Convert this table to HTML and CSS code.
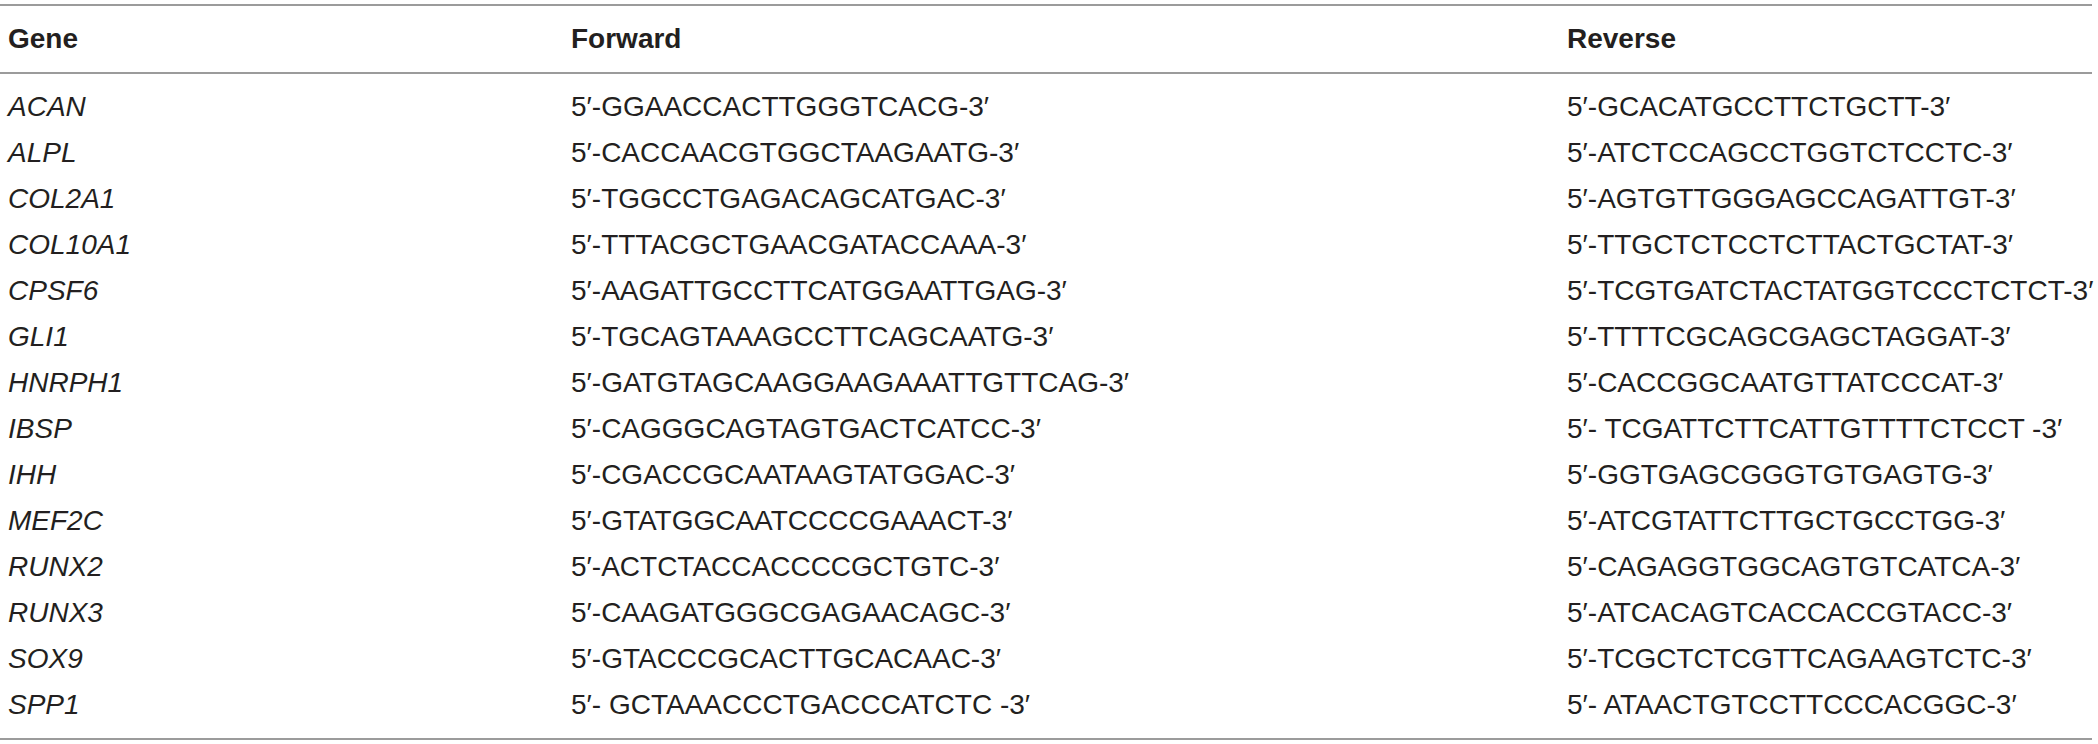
FILE: index.html
```html
<!DOCTYPE html>
<html>
<head>
<meta charset="utf-8">
<link rel="stylesheet" href="styles.css">
</head>
<body>
<table class="primers">
  <colgroup>
    <col class="c-gene">
    <col class="c-fwd">
    <col class="c-rev">
  </colgroup>
  <thead>
    <tr><th>Gene</th><th>Forward</th><th>Reverse</th></tr>
  </thead>
  <tbody>
    <tr><td class="gene">ACAN</td><td>5′-GGAACCACTTGGGTCACG-3′</td><td>5′-GCACATGCCTTCTGCTT-3′</td></tr>
    <tr><td class="gene">ALPL</td><td>5′-CACCAACGTGGCTAAGAATG-3′</td><td>5′-ATCTCCAGCCTGGTCTCCTC-3′</td></tr>
    <tr><td class="gene">COL2A1</td><td>5′-TGGCCTGAGACAGCATGAC-3′</td><td>5′-AGTGTTGGGAGCCAGATTGT-3′</td></tr>
    <tr><td class="gene">COL10A1</td><td>5′-TTTACGCTGAACGATACCAAA-3′</td><td>5′-TTGCTCTCCTCTTACTGCTAT-3′</td></tr>
    <tr><td class="gene">CPSF6</td><td>5′-AAGATTGCCTTCATGGAATTGAG-3′</td><td>5′-TCGTGATCTACTATGGTCCCTCTCT-3′</td></tr>
    <tr><td class="gene">GLI1</td><td>5′-TGCAGTAAAGCCTTCAGCAATG-3′</td><td>5′-TTTTCGCAGCGAGCTAGGAT-3′</td></tr>
    <tr><td class="gene">HNRPH1</td><td>5′-GATGTAGCAAGGAAGAAATTGTTCAG-3′</td><td>5′-CACCGGCAATGTTATCCCAT-3′</td></tr>
    <tr><td class="gene">IBSP</td><td>5′-CAGGGCAGTAGTGACTCATCC-3′</td><td>5′- TCGATTCTTCATTGTTTTCTCCT -3′</td></tr>
    <tr><td class="gene">IHH</td><td>5′-CGACCGCAATAAGTATGGAC-3′</td><td>5′-GGTGAGCGGGTGTGAGTG-3′</td></tr>
    <tr><td class="gene">MEF2C</td><td>5′-GTATGGCAATCCCCGAAACT-3′</td><td>5′-ATCGTATTCTTGCTGCCTGG-3′</td></tr>
    <tr><td class="gene">RUNX2</td><td>5′-ACTCTACCACCCCGCTGTC-3′</td><td>5′-CAGAGGTGGCAGTGTCATCA-3′</td></tr>
    <tr><td class="gene">RUNX3</td><td>5′-CAAGATGGGCGAGAACAGC-3′</td><td>5′-ATCACAGTCACCACCGTACC-3′</td></tr>
    <tr><td class="gene">SOX9</td><td>5′-GTACCCGCACTTGCACAAC-3′</td><td>5′-TCGCTCTCGTTCAGAAGTCTC-3′</td></tr>
    <tr><td class="gene">SPP1</td><td>5′- GCTAAACCCTGACCCATCTC -3′</td><td>5′- ATAACTGTCCTTCCCACGGC-3′</td></tr>
  </tbody>
</table>
</body>
</html>
```

FILE: styles.css
```css
html, body {
  margin: 0;
  padding: 0;
  background: #ffffff;
}

body {
  font-family: "Liberation Sans", Arial, Helvetica, sans-serif;
  color: #231f20;
}

.primers {
  margin-top: 4px;
  width: 2092px;
  border-collapse: collapse;
  table-layout: fixed;
  font-size: 28px;
  line-height: 46px;
}

.c-gene { width: 563px; }
.c-fwd { width: 996px; }
.c-rev { width: 533px; }

.primers th,
.primers td {
  padding: 0 8px;
  text-align: left;
  white-space: nowrap;
  vertical-align: baseline;
}

.primers thead tr {
  border-top: 2px solid #9b9b9b;
  border-bottom: 2px solid #9b9b9b;
}

.primers th {
  font-weight: bold;
  padding-top: 10px;
  padding-bottom: 10px;
}

.primers tbody tr:first-child td {
  padding-top: 10px;
}

.primers tbody tr:last-child {
  border-bottom: 2px solid #9b9b9b;
}

.primers tbody tr:last-child td {
  padding-bottom: 10px;
}

.gene {
  font-style: italic;
}
```
